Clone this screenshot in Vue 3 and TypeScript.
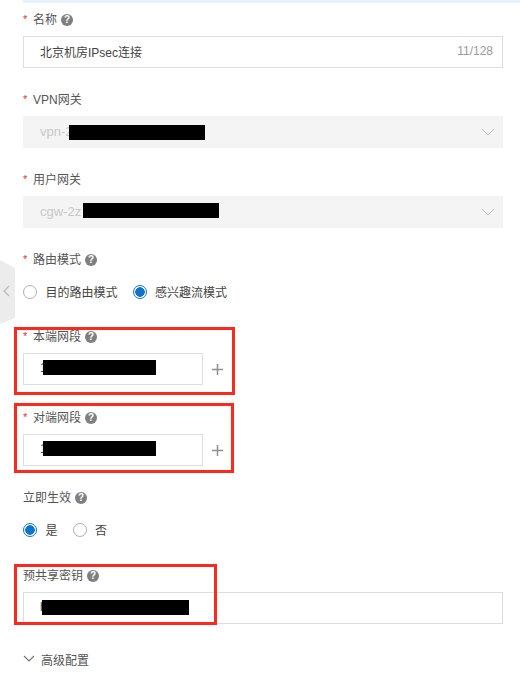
<script setup lang="ts">
interface Box { x: number; y: number; w: number; h: number }

const masks: Box[] = [
  { x: 69, y: 125, w: 136, h: 15 },
  { x: 83, y: 203, w: 136, h: 15 },
  { x: 43, y: 360, w: 113, h: 15 },
  { x: 43, y: 441, w: 113, h: 15 },
  { x: 42, y: 600, w: 147, h: 15 },
]
const frames: Box[] = [
  { x: 14, y: 327, w: 221, h: 68 },
  { x: 14, y: 403, w: 220, h: 70 },
  { x: 14, y: 564, w: 203, h: 61 },
]
const boxStyle = (b: Box) => ({
  left: b.x + 'px',
  top: b.y + 'px',
  width: b.w + 'px',
  height: b.h + 'px',
})
</script>

<template>
  <div class="page">
    <div class="notice"></div>

    <form class="form" @submit.prevent>
      <div class="item">
        <div class="label"><i class="req">*</i>名称<span class="help">?</span></div>
        <div class="control">
          <span class="value">北京机房IPsec连接</span>
          <span class="count">11/128</span>
        </div>
      </div>

      <div class="item">
        <div class="label"><i class="req">*</i>VPN网关</div>
        <div class="control disabled">
          <span class="value">vpn-2</span>
          <svg class="arrow" viewBox="0 0 14 8" width="14" height="8"><path d="M1 1l6 6 6-6" /></svg>
        </div>
      </div>

      <div class="item">
        <div class="label"><i class="req">*</i>用户网关</div>
        <div class="control disabled">
          <span class="value">cgw-2z</span>
          <svg class="arrow" viewBox="0 0 14 8" width="14" height="8"><path d="M1 1l6 6 6-6" /></svg>
        </div>
      </div>

      <div class="item radios-item">
        <div class="label"><i class="req">*</i>路由模式<span class="help">?</span></div>
        <div class="radios">
          <label class="radio"><span class="dot"></span><span class="radio-text">目的路由模式</span></label>
          <label class="radio"><span class="dot on"></span><span class="radio-text">感兴趣流模式</span></label>
        </div>
      </div>

      <div class="item tight">
        <div class="label"><i class="req">*</i>本端网段<span class="help">?</span></div>
        <div class="row">
          <div class="control short"><span class="value">1</span></div>
          <svg class="plus" viewBox="0 0 11 11" width="11" height="11"><path d="M5.5 0v11M0 5.5h11" /></svg>
        </div>
      </div>

      <div class="item">
        <div class="label"><i class="req">*</i>对端网段<span class="help">?</span></div>
        <div class="row">
          <div class="control short"><span class="value">1</span></div>
          <svg class="plus" viewBox="0 0 11 11" width="11" height="11"><path d="M5.5 0v11M0 5.5h11" /></svg>
        </div>
      </div>

      <div class="item radios-item">
        <div class="label">立即生效<span class="help">?</span></div>
        <div class="radios">
          <label class="radio"><span class="dot on"></span><span class="radio-text">是</span></label>
          <label class="radio"><span class="dot"></span><span class="radio-text">否</span></label>
        </div>
      </div>

      <div class="item">
        <div class="label">预共享密钥<span class="help">?</span></div>
        <div class="control"><span class="value">h</span></div>
      </div>

      <div class="advanced">
        <svg class="adv-arrow" viewBox="0 0 12 8" width="12" height="8"><path d="M1 1l5 5 5-5" /></svg>
        高级配置
      </div>
    </form>

    <div class="handle">
      <svg viewBox="0 0 7 12" width="7" height="12"><path d="M6 1L1 6l5 5" /></svg>
    </div>

    <div v-for="(m, i) in masks" :key="'m' + i" class="mask" :style="boxStyle(m)"></div>
    <div v-for="(f, i) in frames" :key="'f' + i" class="frame" :style="boxStyle(f)"></div>
  </div>
</template>

<style>
html, body { margin: 0; background: #fff; }
</style>

<style scoped>
.page {
  position: relative;
  width: 520px;
  height: 674px;
  overflow: hidden;
  background: #fff;
  font-family: "Liberation Sans", "Noto Sans CJK SC", sans-serif;
  font-size: 12px;
  color: #555;
}
.notice {
  height: 3px;
  margin-left: 23px;
  background: #e6f3fd;
}
.form {
  width: 480px;
  margin-left: 23px;
  padding-top: 8px;
}
.item { margin-bottom: 23px; }
.item.radios-item { margin-bottom: 21px; }
.item.tight { margin-bottom: 24px; }
.label {
  display: flex;
  align-items: center;
  height: 16px;
  line-height: 16px;
  padding-top: 1px;
  margin-bottom: 8px;
}
.item.tight .label { padding-top: 0; }
.req {
  width: 10px;
  color: #e5322d;
  font-style: normal;
  font-size: 11px;
  line-height: 12px;
  align-self: flex-start;
  margin-top: 1px;
}
.help {
  width: 12px;
  height: 12px;
  margin-left: 4px;
  border-radius: 50%;
  background: #7f7f7f;
  color: #fff;
  font-size: 10px;
  font-weight: 700;
  line-height: 12px;
  text-align: center;
}
.control {
  box-sizing: border-box;
  display: flex;
  align-items: center;
  justify-content: space-between;
  height: 32px;
  padding: 0 9px 0 16px;
  border: 1px solid #dedede;
  background: #fff;
  color: #444;
}
.value, .count, .radio-text { margin-bottom: 2px; }
.control.disabled {
  border-color: #f4f4f4;
  background: #f4f4f4;
  color: #c8c8c8;
  font-size: 13px;
  padding-right: 7px;
}
.control.short { width: 180px; }
.count { color: #9a9a9a; }
.arrow, .adv-arrow, .plus, .handle svg { fill: none; }
.arrow path { stroke: #bdbdbd; stroke-width: 1; }
.row {
  display: flex;
  align-items: center;
  gap: 9px;
}
.plus path { stroke: #8f8f8f; stroke-width: 1.5; }
.radios {
  display: flex;
  align-items: center;
  gap: 15px;
  height: 32px;
}
.radio {
  display: flex;
  align-items: center;
  gap: 8.5px;
  color: #444;
}
.dot {
  box-sizing: border-box;
  width: 14px;
  height: 14px;
  border: 1px solid #b0b0b0;
  border-radius: 50%;
  background: #fff;
}
.dot.on {
  border-color: #0f73c9;
  background: radial-gradient(circle, #0f73c9 0 4.5px, #fff 5px);
}
.advanced {
  display: flex;
  align-items: center;
  gap: 6px;
  margin-top: 27px;
  height: 16px;
  color: #555;
}
.adv-arrow path { stroke: #777; stroke-width: 1.2; }
.handle {
  position: absolute;
  left: 0;
  top: 260px;
  width: 15px;
  height: 64px;
  display: flex;
  align-items: center;
  padding: 0 0 2px 3px;
  box-sizing: border-box;
  background: #ececec;
  clip-path: polygon(0 0, 100% 8px, 100% 58px, 0 100%);
}
.handle path { stroke: #b8b8b8; stroke-width: 1.2; }
.mask {
  position: absolute;
  background: #000;
}
.frame {
  position: absolute;
  box-sizing: border-box;
  border: 3px solid #fb2a1f;
}
</style>
